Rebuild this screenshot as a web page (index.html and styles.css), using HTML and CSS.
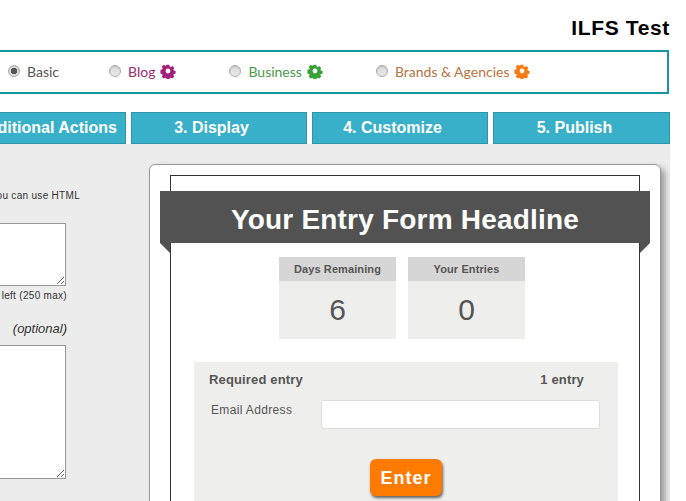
FILE: index.html
```html
<!DOCTYPE html>
<html lang="en">
<head>
    <meta charset="UTF-8">
    <meta name="viewport" content="width=device-width, initial-scale=1.0">
    <title>ILFS Test</title>
    <link rel="stylesheet" href="styles.css">
</head>
<body>
    <svg class="defs" width="0" height="0">
        <symbol id="gear" viewBox="0 0 16 16">
            <path fill-rule="evenodd" d="M6.4 0.6h3.2l0.4 2 1.3 0.6 1.8-1.1 2.3 2.3-1.1 1.8 0.6 1.3 2 0.4v3.2l-2 0.4-0.6 1.3 1.1 1.8-2.3 2.3-1.8-1.1-1.3 0.6-0.4 2H6.4l-0.4-2-1.3-0.6-1.8 1.1-2.3-2.3 1.1-1.8-0.6-1.3-2-0.4V6.5l2-0.4 0.6-1.3-1.1-1.8 2.3-2.3 1.8 1.1 1.3-0.6zM8 5.2a2.8 2.8 0 1 0 0 5.6 2.8 2.8 0 0 0 0-5.6z" transform="translate(1.2 1.2) scale(0.85)"/>
        </symbol>
    </svg>
    <div class="page">
        <h1 class="account">ILFS Test</h1>

        <div class="plans">
            <label class="plan plan-basic"><input type="radio" name="plan" checked> Basic</label>
            <label class="plan plan-blog"><input type="radio" name="plan"> Blog <svg class="gear"><use href="#gear"/></svg></label>
            <label class="plan plan-business"><input type="radio" name="plan"> Business <svg class="gear"><use href="#gear"/></svg></label>
            <label class="plan plan-brands"><input type="radio" name="plan"> Brands &amp; Agencies <svg class="gear"><use href="#gear"/></svg></label>
        </div>

        <div class="tabs">
            <a class="tab tab-actions">2. Additional Actions</a>
            <a class="tab">3. Display</a>
            <a class="tab">4. Customize</a>
            <a class="tab">5. Publish</a>
        </div>

        <div class="panel">
            <div class="settings">
                <p class="hint">you can use HTML</p>
                <textarea class="box-short"></textarea>
                <p class="count">left (250 max)</p>
                <p class="optional">(optional)</p>
                <textarea class="box-tall"></textarea>
            </div>

            <div class="card">
                <div class="frame">
                    <h2 class="headline">Your Entry Form Headline</h2>
                    <div class="stats">
                        <div class="stat">
                            <div class="stat-label">Days Remaining</div>
                            <div class="stat-value">6</div>
                        </div>
                        <div class="stat">
                            <div class="stat-label">Your Entries</div>
                            <div class="stat-value">0</div>
                        </div>
                    </div>
                    <div class="entry">
                        <div class="entry-head">
                            <span>Required entry</span>
                            <span>1 entry</span>
                        </div>
                        <div class="field">
                            <label for="email">Email Address</label>
                            <input type="text" id="email">
                        </div>
                        <button type="button" class="enter">Enter</button>
                    </div>
                </div>
            </div>
        </div>
    </div>
</body>
</html>
```

FILE: styles.css
```css
html, body {
    height: 501px;
    overflow: hidden;
}
body {
    margin: 0;
    background: #fff;
    color: #333;
    font-family: "Liberation Sans", Arial, sans-serif;
}
.defs {
    display: block;
    height: 0;
}
.page {
    width: 770px;
    margin-left: -100px;
}
.account {
    margin: 0;
    height: 50px;
    padding: 16px 0 0 0;
    box-sizing: border-box;
    text-align: right;
    font-size: 21px;
    line-height: 24px;
    letter-spacing: 0.65px;
    color: #000;
}
.plans {
    display: flex;
    align-items: center;
    width: 769px;
    height: 44px;
    padding-bottom: 2px;
    box-sizing: border-box;
    border: 2px solid #1c94a8;
    font-family: Lato, sans-serif;
    font-size: 14px;
}
.plan {
    display: flex;
    align-items: center;
    gap: 5px;
}
.plan input {
    appearance: none;
    width: 12px;
    height: 12px;
    margin: 0 2px 0 0;
    border: 1px solid #aaa;
    border-radius: 50%;
    background: linear-gradient(#d8d8d8, #e8e8e8);
    box-shadow: inset 0 1px 1px rgba(0, 0, 0, 0.1);
}
.plan input:checked {
    background: radial-gradient(circle, #555 0 3px, #ddd 3.5px);
}
.gear {
    width: 16px;
    height: 16px;
    fill: currentColor;
}
.plan-basic {
    margin-left: 106px;
    color: #555;
}
.plan-blog {
    margin-left: 50px;
    color: #9c2a72;
}
.plan-blog .gear { color: #a5207b; }
.plan-business {
    margin-left: 53px;
    color: #4a9a4a;
}
.plan-business .gear { color: #36a336; }
.plan-brands {
    margin-left: 53px;
    color: #b5743f;
}
.plan-brands .gear { color: #f97a10; }
.tabs {
    display: flex;
    justify-content: flex-end;
    gap: 5px;
    margin-top: 18px;
}
.tab {
    width: 176px;
    height: 32px;
    padding-right: 15px;
    box-sizing: border-box;
    border: 1px solid #2f95ab;
    background: #38b0c9;
    color: #fff;
    font-size: 16px;
    font-weight: bold;
    line-height: 29px;
    text-align: center;
}
.tab-actions {
    padding-right: 0;
}
.tab:last-child {
    width: 177px;
    padding-right: 14px;
}
.panel {
    display: flex;
    gap: 82px;
    height: 357px;
    padding: 20px 9px 0 0;
    box-sizing: border-box;
    background: #ececec;
    overflow: hidden;
}
.settings {
    width: 167px;
    flex: none;
    font-size: 10px;
}
.settings p {
    margin: 0;
    text-align: right;
    color: #333;
}
.settings .hint {
    margin-right: -13px;
    padding-top: 26px;
    line-height: 12px;
    height: 33px;
    letter-spacing: 0.3px;
}
.settings textarea {
    display: block;
    width: 168px;
    margin-left: -2px;
    padding: 0;
    box-sizing: border-box;
    border: 1px solid #999;
    background: #fff;
    border-radius: 0;
}
.box-short {
    height: 63px;
}
.box-tall {
    height: 134px;
}
.count {
    padding-top: 4px;
    line-height: 12px;
    letter-spacing: 0.3px;
}
.settings .optional {
    padding-top: 20px;
    height: 23px;
    line-height: 14px;
    font-size: 13px;
    font-style: italic;
}
.card {
    width: 512px;
    height: 400px;
    flex: none;
    padding: 10px 20px 0;
    box-sizing: border-box;
    background: #fff;
    border: 1px solid #999;
    border-radius: 6px;
    box-shadow: 4px 4px 6px rgba(0, 0, 0, 0.35);
}
.frame {
    height: 400px;
    padding-top: 15px;
    box-sizing: border-box;
    border: 1px solid #333;
}
.headline {
    position: relative;
    margin: 0 -11px;
    height: 52px;
    background: #525252;
    color: #fff;
    font-size: 28px;
    line-height: 57px;
    letter-spacing: 0.2px;
    text-align: center;
}
.headline::before,
.headline::after {
    content: "";
    position: absolute;
    top: 52px;
    border-top: 10px solid #525252;
    border-left: 10px solid transparent;
}
.headline::before {
    left: 0;
}
.headline::after {
    right: 0;
    transform: scaleX(-1);
}
.stats {
    display: flex;
    justify-content: center;
    gap: 12px;
    margin: 14px 6px 0 0;
}
.stat {
    width: 117px;
    background: #eeeeec;
    text-align: center;
}
.stat-label {
    height: 24px;
    background: #d6d6d6;
    color: #555;
    font-size: 11px;
    font-weight: bold;
    line-height: 24px;
    letter-spacing: 0.1px;
}
.stat-value {
    height: 58px;
    color: #555;
    font-size: 30px;
    line-height: 58px;
}
.entry {
    width: 424px;
    height: 200px;
    margin: 23px 0 0 23px;
    padding: 10px 18px 0 15px;
    box-sizing: border-box;
    background: #eeeeec;
    color: #555;
}
.entry-head {
    display: flex;
    justify-content: space-between;
    padding-right: 16px;
    font-size: 13px;
    font-weight: bold;
    line-height: 15px;
    letter-spacing: 0.15px;
}
.field {
    display: flex;
    justify-content: space-between;
    margin: 13px 0 0 2px;
    font-size: 12px;
}
.field label {
    padding-top: 3px;
    letter-spacing: 0.35px;
}
.field input {
    width: 279px;
    height: 29px;
    padding: 0;
    box-sizing: border-box;
    border: 1px solid #ddd;
    border-radius: 3px;
    background: #fff;
}
.enter {
    display: block;
    width: 72px;
    height: 37px;
    margin: 30px 0 0 161px;
    padding: 2px 0 0;
    border: none;
    border-radius: 6px;
    background: #ff7b00;
    color: #fff;
    font-family: "Liberation Sans", Arial, sans-serif;
    font-size: 18px;
    font-weight: bold;
    letter-spacing: 1px;
    box-shadow: 1px 2px 3px rgba(0, 0, 0, 0.6);
}
```
